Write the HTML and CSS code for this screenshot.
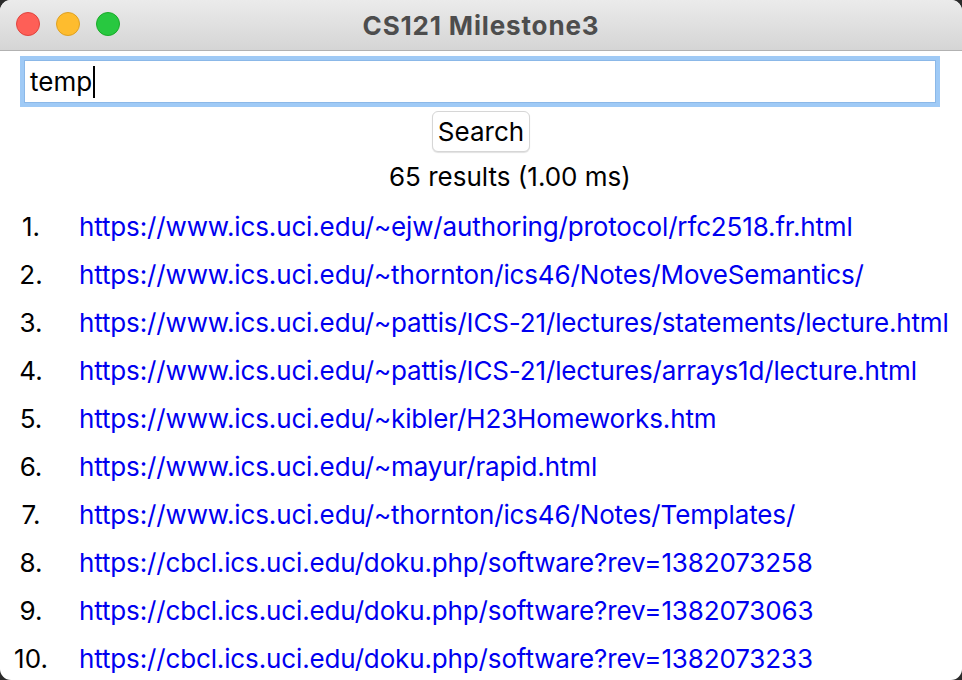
FILE: index.html
```html
<!DOCTYPE html>
<html>
<head>
<meta charset="utf-8">
<link rel="stylesheet" href="styles.css">
</head>
<body>
<div class="window">
  <div class="titlebar">
    <div class="lights">
      <span class="light red"></span>
      <span class="light yellow"></span>
      <span class="light green"></span>
    </div>
    <div class="title">CS121 Milestone3</div>
  </div>
  <div class="content">
    <div class="searchbox"><span class="query">temp</span><span class="caret"></span></div>
    <button class="btn">Search</button>
    <div class="summary">65 results (1.00 ms)</div>
    <ol class="results">
      <li><span class="num">1.</span><a>https://www.ics.uci.edu/~ejw/authoring/protocol/rfc2518.fr.html</a></li>
      <li><span class="num">2.</span><a>https://www.ics.uci.edu/~thornton/ics46/Notes/MoveSemantics/</a></li>
      <li><span class="num">3.</span><a>https://www.ics.uci.edu/~pattis/ICS-21/lectures/statements/lecture.html</a></li>
      <li><span class="num">4.</span><a>https://www.ics.uci.edu/~pattis/ICS-21/lectures/arrays1d/lecture.html</a></li>
      <li><span class="num">5.</span><a>https://www.ics.uci.edu/~kibler/H23Homeworks.htm</a></li>
      <li><span class="num">6.</span><a>https://www.ics.uci.edu/~mayur/rapid.html</a></li>
      <li><span class="num">7.</span><a>https://www.ics.uci.edu/~thornton/ics46/Notes/Templates/</a></li>
      <li><span class="num">8.</span><a>https://cbcl.ics.uci.edu/doku.php/software?rev=1382073258</a></li>
      <li><span class="num">9.</span><a>https://cbcl.ics.uci.edu/doku.php/software?rev=1382073063</a></li>
      <li><span class="num">10.</span><a>https://cbcl.ics.uci.edu/doku.php/software?rev=1382073233</a></li>
    </ol>
  </div>
</div>
</body>
</html>
```

FILE: styles.css
```css
html, body {
  margin: 0;
  padding: 0;
  background: #2b2b2b;
  width: 962px;
  height: 680px;
  overflow: hidden;
}
body {
  font-family: Inter, "Liberation Sans", Arial, sans-serif;
}
.window {
  width: 962px;
  height: 680px;
  background: #ffffff;
  border-radius: 11px;
  overflow: hidden;
  display: flex;
  flex-direction: column;
}
.titlebar {
  height: 50px;
  flex: none;
  background: linear-gradient(#ebebeb, #d5d5d5);
  border-bottom: 1px solid #b2b2b2;
  position: relative;
  display: flex;
  align-items: center;
  justify-content: center;
}
.lights {
  position: absolute;
  left: 16px;
  top: 12px;
  display: flex;
  gap: 16px;
}
.light {
  width: 24px;
  height: 24px;
  border-radius: 50%;
  box-sizing: border-box;
}
.red { background: #fe5f57; border: 1px solid #e0443e; }
.yellow { background: #febc2e; border: 1px solid #dea123; }
.green { background: #28c840; border: 1px solid #1aab29; }
.title {
  font-size: 26px;
  font-weight: bold;
  color: #4d4d4d;
  letter-spacing: 0.85px;
}
.content {
  display: flex;
  flex-direction: column;
  align-items: center;
  padding-top: 5px;
}
.searchbox {
  align-self: flex-start;
  margin-left: 20px;
  width: 920px;
  height: 51px;
  box-sizing: border-box;
  border: 4px solid #9fcaf6;
  box-shadow: inset 0 0 0 1px #8bb8e8;
  display: flex;
  align-items: center;
  padding-left: 6px;
  font-size: 26px;
  color: #000;
}
.caret {
  display: inline-block;
  width: 2px;
  height: 32px;
  background: #000;
  margin-left: 1px;
}
.btn {
  margin-top: 4px;
  height: 41px;
  padding: 0 5px;
  font-family: Inter, "Liberation Sans", Arial, sans-serif;
  font-size: 26px;
  color: #000;
  background: #fff;
  border: 1px solid #d6d6d6;
  border-radius: 6px;
  box-shadow: 0 1px 1px rgba(0,0,0,0.12);
}
.summary {
  align-self: flex-start;
  margin-left: 389px;
  margin-top: 10px;
  font-size: 26px;
  line-height: 30px;
  color: #000;
}
.results {
  align-self: stretch;
  list-style: none;
  margin: 20px 0 0 0;
  padding: 0;
  display: flex;
  flex-direction: column;
  gap: 18px;
}
.results li {
  display: flex;
  align-items: baseline;
  font-size: 26px;
  height: 30px;
  line-height: 30px;
}
.num {
  width: 62px;
  text-align: center;
  color: #000;
  flex: none;
}
.results a {
  margin-left: 17px;
  color: #0000f0;
  white-space: nowrap;
  letter-spacing: -0.14px;
}
```
